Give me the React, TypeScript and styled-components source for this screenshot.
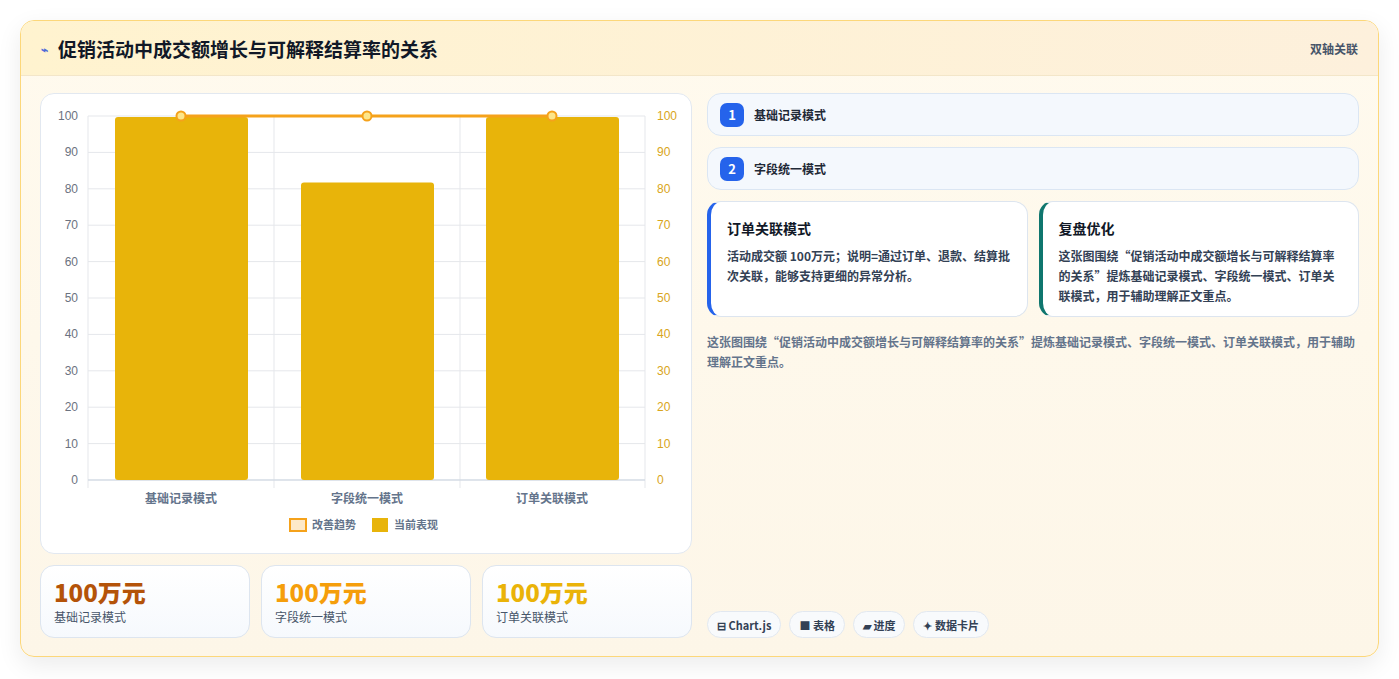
import React from "react";
import styled, { createGlobalStyle } from "styled-components";

const G = createGlobalStyle`
  body{margin:0;background:#fff;font-family:"Noto Sans CJK SC","Noto Sans",sans-serif;}
`;
const Page = styled.div`padding:20px 20px 22px 20px;`;
const Card = styled.div`
  height:637px;box-sizing:border-box;border:1px solid #fcd77a;border-radius:14px;
  background:linear-gradient(180deg,#fffaee,#fdf6e8);box-shadow:0 8px 24px rgba(0,0,0,.08);
  display:flex;flex-direction:column;overflow:hidden;`;
const Header = styled.div`
  height:55px;box-sizing:border-box;display:flex;align-items:center;justify-content:space-between;
  padding:0 20px;background:linear-gradient(90deg,#fff3cf,#fdf0dc);border-bottom:1px solid #f3e6c9;`;
const Title = styled.h1`margin:0;font-size:19px;font-weight:700;color:#111827;display:flex;align-items:center;gap:10px;`;
const Tag = styled.span`font-size:12px;color:#475569;font-weight:600;`;
const Body = styled.div`flex:1;display:grid;grid-template-columns:652px 652px;gap:15px;padding:17px 19px 18px 19px;`;
const Col = styled.div`display:flex;flex-direction:column;gap:11px;`;
const ChartCard = styled.div`height:461px;box-sizing:border-box;background:#fff;border:1px solid #e2e8f0;border-radius:14px;overflow:hidden;`;
const Stats = styled.div`display:grid;grid-template-columns:repeat(3,1fr);gap:11px;`;
const Stat = styled.div`height:73px;box-sizing:border-box;border:1px solid #dde5ef;border-radius:14px;background:linear-gradient(180deg,#fff,#f6f9fd);padding:10px 13px;`;
const Big = styled.div<{c:string}>`font-size:24px;font-weight:800;color:${p=>p.c};line-height:32px;`;
const Small = styled.div`font-size:12px;color:#475569;`;
const Step = styled.div`height:43px;box-sizing:border-box;border:1px solid #dbe6f3;border-radius:14px;background:#f4f8fd;display:flex;align-items:center;gap:10px;padding:0 12px;font-size:12px;font-weight:700;color:#1f2937;`;
const Num = styled.span`width:24px;height:24px;border-radius:7px;background:#2563eb;color:#fff;font-size:13px;font-weight:700;display:flex;align-items:center;justify-content:center;`;
const Pair = styled.div`display:grid;grid-template-columns:1fr 1fr;gap:11px;`;
const Info = styled.div<{c:string}>`height:116px;box-sizing:border-box;background:#fff;border:1px solid #dde5ef;border-left:4px solid ${p=>p.c};border-radius:14px;padding:16px 16px 0 16px;`;
const InfoT = styled.div`font-size:14px;font-weight:700;color:#111827;margin-bottom:8px;`;
const InfoP = styled.div`font-size:12px;font-weight:600;color:#334155;line-height:20px;`;
const Para = styled.p`margin:4px 0 0;font-size:12px;font-weight:600;color:#64748b;line-height:20px;`;
const Chips = styled.div`margin-top:auto;display:flex;gap:8px;`;
const Chip = styled.span`height:27px;box-sizing:border-box;padding:0 9px;border:1px solid #e2e8f0;border-radius:14px;background:#f8fafc;font-size:11px;font-weight:700;color:#334155;display:flex;align-items:center;gap:4px;`;

const Chart = () => {
  const top = 22, bot = 386, l = 47, r = 604;
  const y = (v:number) => bot - (v/100)*(bot-top);
  const ticks = [0,10,20,30,40,50,60,70,80,90,100];
  const xs = [140, 326, 511];
  const vals = [100, 82, 100];
  const labels = ["基础记录模式","字段统一模式","订单关联模式"];
  return (
    <svg width="652" height="461" style={{display:"block"}} fontFamily="'Liberation Sans','Noto Sans CJK SC',sans-serif">
      {ticks.map(t=>(<g key={t}>
        <line x1={l} x2={r} y1={y(t)} y2={y(t)} stroke="#e5e7eb"/>
        <text x={l-10} y={y(t)+4} fontSize="12" fill="#6b7280" textAnchor="end">{t}</text>
        <text x={r+12} y={y(t)+4} fontSize="12" fill="#d9a520">{t}</text>
      </g>))}
      {[l,233,419,r].map(x=><line key={x} x1={x} x2={x} y1={top} y2={bot+8} stroke="#e5e7eb"/>)}
      <line x1={l} x2={r} y1={bot} y2={bot} stroke="#cbd5e1"/>
      {xs.map((x,i)=>(<g key={x}>
        <rect x={x-66} y={y(vals[i])+1} width="133" height={bot-y(vals[i])-1} rx="3" fill="#e8b40a"/>
        <text x={x} y={409} fontSize="12" fontWeight="600" fill="#64748b" textAnchor="middle" fontFamily="'Noto Sans CJK SC',sans-serif">{labels[i]}</text>
      </g>))}
      <line x1={140} x2={511} y1={y(100)} y2={y(100)} stroke="#f5a21b" strokeWidth="3"/>
      {xs.map(x=><circle key={x} cx={x} cy={y(100)} r="4.5" fill="#fde68a" stroke="#f5a21b" strokeWidth="2"/>)}
      <rect x={249} y={425} width={16} height={12} fill="#fde9c8" stroke="#f5a21b" strokeWidth="2"/>
      <text x={271} y={435} fontSize="11" fontWeight="600" fill="#64748b" fontFamily="'Noto Sans CJK SC',sans-serif">改善趋势</text>
      <rect x={331} y={424} width={16} height={14} fill="#e8b40a"/>
      <text x={353} y={435} fontSize="11" fontWeight="600" fill="#64748b" fontFamily="'Noto Sans CJK SC',sans-serif">当前表现</text>
    </svg>
  );
};

export default function App(){
  return (<Page><G/>
    <Card>
      <Header>
        <Title><span style={{fontSize:12,color:"#4f6bd8"}}>⌁</span>促销活动中成交额增长与可解释结算率的关系</Title>
        <Tag>双轴关联</Tag>
      </Header>
      <Body>
        <Col>
          <ChartCard><Chart/></ChartCard>
          <Stats>
            <Stat><Big c="#b45309">100万元</Big><Small>基础记录模式</Small></Stat>
            <Stat><Big c="#f59e0b">100万元</Big><Small>字段统一模式</Small></Stat>
            <Stat><Big c="#eab308">100万元</Big><Small>订单关联模式</Small></Stat>
          </Stats>
        </Col>
        <Col>
          <Step><Num>1</Num>基础记录模式</Step>
          <Step><Num>2</Num>字段统一模式</Step>
          <Pair>
            <Info c="#2563eb"><InfoT>订单关联模式</InfoT><InfoP>活动成交额 100万元；说明=通过订单、退款、结算批次关联，能够支持更细的异常分析。</InfoP></Info>
            <Info c="#0f766e"><InfoT>复盘优化</InfoT><InfoP>这张图围绕“促销活动中成交额增长与可解释结算率的关系”提炼基础记录模式、字段统一模式、订单关联模式，用于辅助理解正文重点。</InfoP></Info>
          </Pair>
          <Para>这张图围绕“促销活动中成交额增长与可解释结算率的关系”提炼基础记录模式、字段统一模式、订单关联模式，用于辅助理解正文重点。</Para>
          <Chips>
            <Chip>⊟ Chart.js</Chip><Chip>■ 表格</Chip><Chip>▰ 进度</Chip><Chip>✦ 数据卡片</Chip>
          </Chips>
        </Col>
      </Body>
    </Card>
  </Page>);
}
